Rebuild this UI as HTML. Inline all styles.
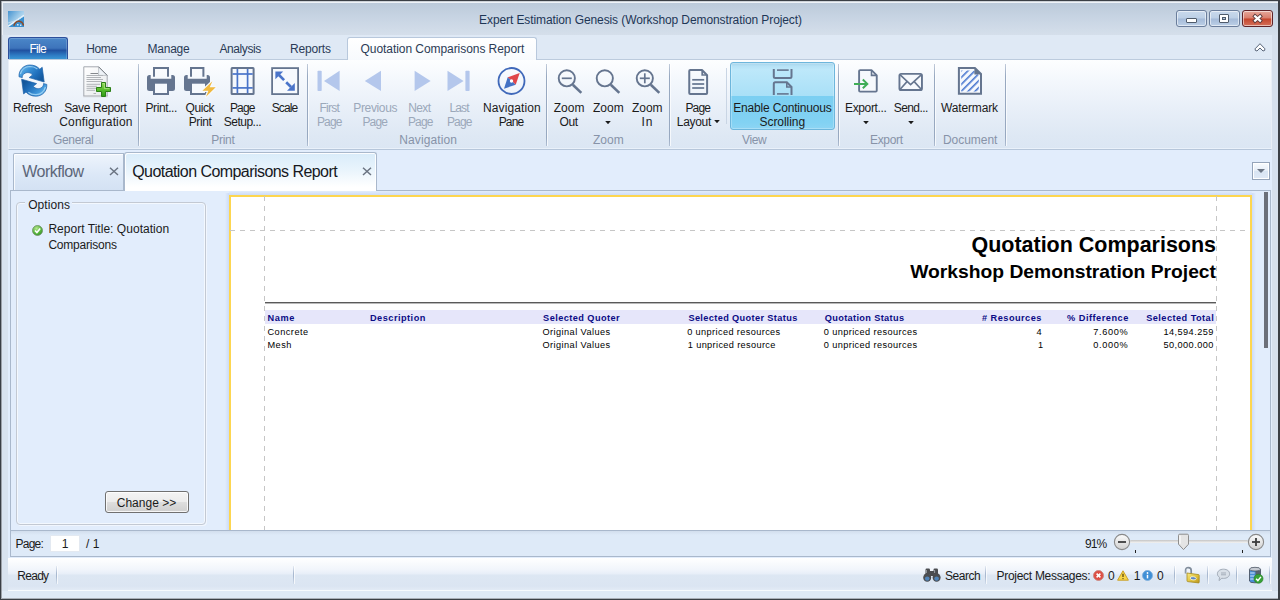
<!DOCTYPE html>
<html lang="en"><head><meta charset="utf-8"><title>Expert Estimation Genesis (Workshop Demonstration Project)</title>
<style>
html,body{margin:0;padding:0;}
body{width:1280px;height:600px;overflow:hidden;position:relative;background:#dfe9f5;font-family:"Liberation Sans", sans-serif;font-size:12px;}
div,svg{position:absolute;box-sizing:border-box;}
.t{white-space:nowrap;}
</style></head><body>
<div style="left:0px;top:0px;width:1280px;height:600px;background:#3b3f45;"></div>
<div style="left:1px;top:1px;width:1277px;height:598px;background:#a9aeb6;"></div>
<div style="left:1px;top:1px;width:1277px;height:597px;background:linear-gradient(90deg,#9da2a9 0,#9da2a9 1px,transparent 1px),linear-gradient(#cdd2d8 0,#cdd2d8 1px,transparent 1px),#eff3f8;"></div>
<div style="left:3px;top:3px;width:1275px;height:595px;background:#dfe9f5;"></div>
<div style="left:3px;top:3px;width:1275px;height:32px;background:linear-gradient(#bccada,#c6d3e2 40%,#d5dfeb);"></div>
<div style="left:2px;top:35px;width:6px;height:563px;background:#d9e3ef;"></div>
<div style="left:1272px;top:35px;width:6px;height:563px;background:#d6e0ed;"></div>
<svg style="left:8px;top:11px" width="16" height="16" viewBox="0 0 16 16"><defs><linearGradient id="ai" x1="0" y1="0" x2="1" y2=".8"><stop offset="0" stop-color="#4593d0"/><stop offset=".55" stop-color="#9fcbe9"/><stop offset="1" stop-color="#d6eaf7"/></linearGradient></defs>
<rect width="16" height="16" fill="url(#ai)"/><path d="M0 16 V15.6 L16 4.6 V16 Z" fill="#3a90d0"/><path d="M0 15.4 L16 4.4" stroke="#eef6fc" stroke-width="1.3"/><path d="M0 12 Q8 10.5 16 5" stroke="#cfe5f5" stroke-width=".7" fill="none"/>
<path d="M5.8 14.8 Q7.6 9.6 11.6 10.3 Q15 11 15.6 14.6" stroke="#8a4b2b" stroke-width="1.5" fill="none"/><path d="M9 13 h1.6 v1.6 h-1.6 z M12 13.6 h1.4 v1.4 h-1.4 z" fill="#cfe6f6"/></svg>
<div class="t" style="left:340.5px;width:600px;text-align:center;top:11.5px;line-height:16px;font-size:12px;color:#1e3656;font-weight:normal;letter-spacing:-0.1px;">Expert Estimation Genesis (Workshop Demonstration Project)</div>
<div style="left:1176px;top:10px;width:31px;height:17px;border:1px solid #6a7d9b;border-radius:3px;background:linear-gradient(#c9d9ec,#bccfe6 48%,#a4bad8 52%,#bdd0e7);box-shadow:inset 0 0 0 1px rgba(255,255,255,.55);"></div>
<div style="left:1209px;top:10px;width:31px;height:17px;border:1px solid #6a7d9b;border-radius:3px;background:linear-gradient(#c9d9ec,#bccfe6 48%,#a4bad8 52%,#bdd0e7);box-shadow:inset 0 0 0 1px rgba(255,255,255,.55);"></div>
<div style="left:1242px;top:10px;width:31px;height:17px;border:1px solid #5f2328;border-radius:3px;background:linear-gradient(#e5a89b,#d97d6b 48%,#c4452c 52%,#d4705a);box-shadow:inset 0 0 0 1px rgba(255,255,255,.55);"></div>
<div style="left:1186px;top:18px;width:11px;height:5px;background:#fff;border:1px solid #4f5b6b;border-radius:1px;"></div>
<div style="left:1219px;top:14px;width:10px;height:9px;background:#fff;border:1px solid #4f5b6b;border-radius:1px;"></div>
<div style="left:1222px;top:17px;width:4px;height:3px;background:#b4c5dc;border:1px solid #4f5b6b;"></div>
<svg style="left:1251px;top:13px" width="13" height="11" viewBox="0 0 13 11"><path d="M2.6 2 L10.6 9 M10.6 2 L2.6 9" stroke="#5a3a3c" stroke-width="3.8"/><path d="M3.3 2.6 L9.9 8.4 M9.9 2.6 L3.3 8.4" stroke="#fff" stroke-width="2.1"/></svg>
<div style="left:8px;top:37px;width:60px;height:23px;border:1px solid #2c4f9b;border-bottom:none;border-radius:3px 3px 0 0;background:linear-gradient(#4b87c9,#3d74bb 46%,#2051a0 56%,#2f7ec6 80%,#3d9bd6 100%);box-shadow:inset 0 0 0 1px rgba(255,255,255,.18);"></div>
<div class="t" style="left:29.50px;top:40.5px;line-height:16px;font-size:12px;color:#fff;font-weight:normal;letter-spacing:-0.754px;">File</div>
<div class="t" style="left:86.25px;top:40.5px;line-height:16px;font-size:12px;color:#2b3b55;font-weight:normal;letter-spacing:-0.362px;">Home</div>
<div class="t" style="left:147.50px;top:40.5px;line-height:16px;font-size:12px;color:#2b3b55;font-weight:normal;letter-spacing:-0.238px;">Manage</div>
<div class="t" style="left:219.50px;top:40.5px;line-height:16px;font-size:12px;color:#2b3b55;font-weight:normal;letter-spacing:-0.419px;">Analysis</div>
<div class="t" style="left:290.00px;top:40.5px;line-height:16px;font-size:12px;color:#2b3b55;font-weight:normal;letter-spacing:-0.170px;">Reports</div>
<div style="left:8px;top:59px;width:1264px;height:91px;box-shadow:inset 0 -1px 0 rgba(240,245,252,.7);border:1px solid #b6c6da;border-left-color:#e9eff7;border-right-color:#e9eff7;border-top:1px solid #bccbdd;background:linear-gradient(#fdfeff,#f3f7fc 25%,#e8eff8 55%,#dee8f4 85%,#dbe6f3);"></div>
<div style="left:347px;top:37px;width:190px;height:23px;border:1px solid #b8c8dc;border-bottom:none;border-radius:3px 3px 0 0;background:linear-gradient(#ffffff,#f7fafd);"></div>
<div class="t" style="left:360.50px;top:40.5px;line-height:16px;font-size:12px;color:#2b3b55;font-weight:normal;letter-spacing:-0.059px;">Quotation Comparisons Report</div>
<svg style="left:1254px;top:42.5px" width="12" height="10" viewBox="0 0 12 10"><path d="M1.1 5.8 L6 .7 L10.9 5.8 Q11.3 8 9 8 L6 5 L3 8 Q.7 8 1.1 5.8 Z" fill="#fff" stroke="#46546a" stroke-width=".9" stroke-linejoin="round"/></svg>
<div style="left:138px;top:64px;width:1px;height:82px;background:linear-gradient(rgba(147,164,189,.55),#97a8c0 15%,#97a8c0 90%,rgba(147,164,189,.6));"></div>
<div style="left:139px;top:64px;width:1px;height:82px;background:rgba(255,255,255,.7);"></div>
<div style="left:307px;top:64px;width:1px;height:82px;background:linear-gradient(rgba(147,164,189,.55),#97a8c0 15%,#97a8c0 90%,rgba(147,164,189,.6));"></div>
<div style="left:308px;top:64px;width:1px;height:82px;background:rgba(255,255,255,.7);"></div>
<div style="left:546px;top:64px;width:1px;height:82px;background:linear-gradient(rgba(147,164,189,.55),#97a8c0 15%,#97a8c0 90%,rgba(147,164,189,.6));"></div>
<div style="left:547px;top:64px;width:1px;height:82px;background:rgba(255,255,255,.7);"></div>
<div style="left:669px;top:64px;width:1px;height:82px;background:linear-gradient(rgba(147,164,189,.55),#97a8c0 15%,#97a8c0 90%,rgba(147,164,189,.6));"></div>
<div style="left:670px;top:64px;width:1px;height:82px;background:rgba(255,255,255,.7);"></div>
<div style="left:838px;top:64px;width:1px;height:82px;background:linear-gradient(rgba(147,164,189,.55),#97a8c0 15%,#97a8c0 90%,rgba(147,164,189,.6));"></div>
<div style="left:839px;top:64px;width:1px;height:82px;background:rgba(255,255,255,.7);"></div>
<div style="left:934px;top:64px;width:1px;height:82px;background:linear-gradient(rgba(147,164,189,.55),#97a8c0 15%,#97a8c0 90%,rgba(147,164,189,.6));"></div>
<div style="left:935px;top:64px;width:1px;height:82px;background:rgba(255,255,255,.7);"></div>
<div style="left:1005px;top:64px;width:1px;height:82px;background:linear-gradient(rgba(147,164,189,.55),#97a8c0 15%,#97a8c0 90%,rgba(147,164,189,.6));"></div>
<div style="left:1006px;top:64px;width:1px;height:82px;background:rgba(255,255,255,.7);"></div>
<div class="t" style="left:53.00px;top:131.5px;line-height:16px;font-size:12px;color:#8793a8;font-weight:normal;letter-spacing:-0.338px;">General</div>
<div class="t" style="left:211.25px;top:131.5px;line-height:16px;font-size:12px;color:#8793a8;font-weight:normal;letter-spacing:-0.272px;">Print</div>
<div class="t" style="left:399.25px;top:131.5px;line-height:16px;font-size:12px;color:#8793a8;font-weight:normal;letter-spacing:0.108px;">Navigation</div>
<div class="t" style="left:593.00px;top:131.5px;line-height:16px;font-size:12px;color:#8793a8;font-weight:normal;letter-spacing:0.024px;">Zoom</div>
<div class="t" style="left:742.00px;top:131.5px;line-height:16px;font-size:12px;color:#8793a8;font-weight:normal;letter-spacing:-0.376px;">View</div>
<div class="t" style="left:870.00px;top:131.5px;line-height:16px;font-size:12px;color:#8793a8;font-weight:normal;letter-spacing:-0.330px;">Export</div>
<div class="t" style="left:943.00px;top:131.5px;line-height:16px;font-size:12px;color:#8793a8;font-weight:normal;letter-spacing:-0.051px;">Document</div>
<div style="left:730px;top:62px;width:105px;height:68px;border:1px solid #6db6dc;border-radius:3px;background:linear-gradient(#a6d4eb,#b6e2f6 5%,#bde8fa 10%,#a9e0f7 49.5%,#7bcff2 50.5%,#82d2f3 90%,#8dd5f4);box-shadow:inset 0 0 0 1px rgba(255,255,255,.25);"></div>
<div style="left:726px;top:68px;width:1px;height:56px;background:#c9d5e4;"></div>
<div class="t" style="left:13.00px;top:100.0px;line-height:16px;font-size:12px;color:#1b1b1b;font-weight:normal;letter-spacing:-0.432px;">Refresh</div>
<div class="t" style="left:64.25px;top:100.0px;line-height:16px;font-size:12px;color:#1b1b1b;font-weight:normal;letter-spacing:-0.412px;">Save Report</div>
<div class="t" style="left:59.25px;top:114.0px;line-height:16px;font-size:12px;color:#1b1b1b;font-weight:normal;letter-spacing:0.150px;">Configuration</div>
<div class="t" style="left:145.50px;top:100.0px;line-height:16px;font-size:12px;color:#1b1b1b;font-weight:normal;letter-spacing:-0.406px;">Print...</div>
<div class="t" style="left:185.50px;top:100.0px;line-height:16px;font-size:12px;color:#1b1b1b;font-weight:normal;letter-spacing:-0.418px;">Quick</div>
<div class="t" style="left:188.75px;top:114.0px;line-height:16px;font-size:12px;color:#1b1b1b;font-weight:normal;letter-spacing:-0.397px;">Print</div>
<div class="t" style="left:230.00px;top:100.0px;line-height:16px;font-size:12px;color:#1b1b1b;font-weight:normal;letter-spacing:-0.900px;">Page</div>
<div class="t" style="left:223.75px;top:114.0px;line-height:16px;font-size:12px;color:#1b1b1b;font-weight:normal;letter-spacing:-0.504px;">Setup...</div>
<div class="t" style="left:271.75px;top:100.0px;line-height:16px;font-size:12px;color:#1b1b1b;font-weight:normal;letter-spacing:-0.900px;">Scale</div>
<div class="t" style="left:319.50px;top:100.0px;line-height:16px;font-size:12px;color:#9ba8ba;font-weight:normal;letter-spacing:-0.748px;">First</div>
<div class="t" style="left:317.00px;top:114.0px;line-height:16px;font-size:12px;color:#9ba8ba;font-weight:normal;letter-spacing:-0.900px;">Page</div>
<div class="t" style="left:353.25px;top:100.0px;line-height:16px;font-size:12px;color:#9ba8ba;font-weight:normal;letter-spacing:-0.348px;">Previous</div>
<div class="t" style="left:362.50px;top:114.0px;line-height:16px;font-size:12px;color:#9ba8ba;font-weight:normal;letter-spacing:-0.900px;">Page</div>
<div class="t" style="left:408.25px;top:100.0px;line-height:16px;font-size:12px;color:#9ba8ba;font-weight:normal;letter-spacing:-0.613px;">Next</div>
<div class="t" style="left:408.00px;top:114.0px;line-height:16px;font-size:12px;color:#9ba8ba;font-weight:normal;letter-spacing:-0.900px;">Page</div>
<div class="t" style="left:449.50px;top:100.0px;line-height:16px;font-size:12px;color:#9ba8ba;font-weight:normal;letter-spacing:-0.900px;">Last</div>
<div class="t" style="left:447.00px;top:114.0px;line-height:16px;font-size:12px;color:#9ba8ba;font-weight:normal;letter-spacing:-0.900px;">Page</div>
<div class="t" style="left:483.00px;top:100.0px;line-height:16px;font-size:12px;color:#1b1b1b;font-weight:normal;letter-spacing:0.108px;">Navigation</div>
<div class="t" style="left:498.75px;top:114.0px;line-height:16px;font-size:12px;color:#1b1b1b;font-weight:normal;letter-spacing:-0.900px;">Pane</div>
<div class="t" style="left:553.75px;top:100.0px;line-height:16px;font-size:12px;color:#1b1b1b;font-weight:normal;letter-spacing:0.024px;">Zoom</div>
<div class="t" style="left:559.50px;top:114.0px;line-height:16px;font-size:12px;color:#1b1b1b;font-weight:normal;letter-spacing:-0.379px;">Out</div>
<div class="t" style="left:593.00px;top:100.0px;line-height:16px;font-size:12px;color:#1b1b1b;font-weight:normal;letter-spacing:0.024px;">Zoom</div>
<div class="t" style="left:632.00px;top:100.0px;line-height:16px;font-size:12px;color:#1b1b1b;font-weight:normal;letter-spacing:-0.059px;">Zoom</div>
<div class="t" style="left:641.50px;top:114.0px;line-height:16px;font-size:12px;color:#1b1b1b;font-weight:normal;letter-spacing:0.916px;">In</div>
<div class="t" style="left:685.50px;top:100.0px;line-height:16px;font-size:12px;color:#1b1b1b;font-weight:normal;letter-spacing:-0.900px;">Page</div>
<div class="t" style="left:676.75px;top:114.0px;line-height:16px;font-size:12px;color:#1b1b1b;font-weight:normal;letter-spacing:-0.289px;">Layout</div>
<div class="t" style="left:733.25px;top:100.0px;line-height:16px;font-size:12px;color:#1b1b1b;font-weight:normal;letter-spacing:-0.182px;">Enable Continuous</div>
<div class="t" style="left:759.50px;top:114.0px;line-height:16px;font-size:12px;color:#1b1b1b;font-weight:normal;letter-spacing:-0.043px;">Scrolling</div>
<div class="t" style="left:845.00px;top:100.0px;line-height:16px;font-size:12px;color:#1b1b1b;font-weight:normal;letter-spacing:-0.356px;">Export...</div>
<div class="t" style="left:893.70px;top:100.0px;line-height:16px;font-size:12px;color:#1b1b1b;font-weight:normal;letter-spacing:-0.566px;">Send...</div>
<div class="t" style="left:941.00px;top:100.0px;line-height:16px;font-size:12px;color:#1b1b1b;font-weight:normal;letter-spacing:-0.153px;">Watermark</div>
<svg style="left:604.9px;top:120.7px" width="6" height="3.4" viewBox="0 0 6 3.4"><path d="M.2 0 H5.8 L3 3.2 Z" fill="#1b1b1b"/></svg>
<svg style="left:714px;top:119.9px" width="6" height="3.4" viewBox="0 0 6 3.4"><path d="M.2 0 H5.8 L3 3.2 Z" fill="#1b1b1b"/></svg>
<svg style="left:862.8px;top:121.0px" width="6" height="3.4" viewBox="0 0 6 3.4"><path d="M.2 0 H5.8 L3 3.2 Z" fill="#1b1b1b"/></svg>
<svg style="left:908px;top:121.0px" width="6" height="3.4" viewBox="0 0 6 3.4"><path d="M.2 0 H5.8 L3 3.2 Z" fill="#1b1b1b"/></svg>
<svg style="left:14px;top:62px" width="40" height="40" viewBox="0 0 40 40"><defs>
<linearGradient id="rg1" x1="0" y1="0" x2="1" y2=".6"><stop offset="0" stop-color="#7cc3f0"/><stop offset=".4" stop-color="#3b93d8"/><stop offset=".75" stop-color="#1f6fbc"/><stop offset="1" stop-color="#155a9f"/></linearGradient>
<linearGradient id="rg2" x1="0" y1="0" x2="1" y2=".6"><stop offset="0" stop-color="#8fd0f5"/><stop offset=".35" stop-color="#3f97db"/><stop offset=".8" stop-color="#1c68b3"/><stop offset="1" stop-color="#14579b"/></linearGradient></defs>
<path d="M5 14.8 C4.6 8 9.5 3.2 15.5 3 C20 2.9 23.5 4.5 25.8 7.2 L28.2 5.3 L30.2 20 L15.2 15.6 L18.6 12.9 C16.5 10.3 12.5 9.8 10 11.8 C8.7 12.9 8.2 14.2 8.3 15.6 Z" fill="url(#rg1)" stroke="#1b5ea6" stroke-width=".7" stroke-linejoin="round"/>
<path d="M6.4 12 C7.5 7.5 11.5 4.6 16 4.5 C19 4.5 21.5 5.4 23.4 7" stroke="#b7e0f8" stroke-width="1.1" fill="none" opacity=".75"/>
<g transform="rotate(180 18.9 18.6)"><path d="M5 14.8 C4.6 8 9.5 3.2 15.5 3 C20 2.9 23.5 4.5 25.8 7.2 L28.2 5.3 L30.2 20 L15.2 15.6 L18.6 12.9 C16.5 10.3 12.5 9.8 10 11.8 C8.7 12.9 8.2 14.2 8.3 15.6 Z" fill="url(#rg2)" stroke="#1b5ea6" stroke-width=".7" stroke-linejoin="round"/>
<path d="M6.4 12 C7.5 7.5 11.5 4.6 16 4.5 C19 4.5 21.5 5.4 23.4 7" stroke="#a9daf7" stroke-width="1.3" fill="none" opacity=".8"/></g>
</svg>
<svg style="left:82px;top:65px" width="30" height="33" viewBox="0 0 30 33"><defs><linearGradient id="pg" x1="0" y1="0" x2="1" y2="1"><stop offset="0" stop-color="#ffffff"/><stop offset="1" stop-color="#e6e9ec"/></linearGradient>
<linearGradient id="gp" x1="0" y1="0" x2="0" y2="1"><stop offset="0" stop-color="#93d85a"/><stop offset=".5" stop-color="#58bd2c"/><stop offset="1" stop-color="#2e9a16"/></linearGradient></defs>
<path d="M1.8 1.8 H16.6 L25.2 10.4 V31 H1.8 Z" fill="url(#pg)" stroke="#a4a9af" stroke-width="1"/>
<path d="M1.2 31.7 H25.8" stroke="#c9ccd0" stroke-width="1"/>
<path d="M16.6 1.8 V10.4 H25.2 Z" fill="#eef2f7" stroke="#b4b9bf" stroke-width=".8"/>
<path d="M16.6 1.8 L25.2 10.4" stroke="#6f747a" stroke-width=".9"/>
<g stroke="#b1b4b8" stroke-width="1"><path d="M8.5 8.5 H16" stroke="#85888c"/><path d="M4.5 10.5 H21"/><path d="M4.5 12.5 H19"/><path d="M4.5 14.5 H21"/><path d="M4.5 16.5 H20"/><path d="M4.5 19.3 H18"/><path d="M4.5 21.3 H15"/><path d="M4.5 23.3 H14"/><path d="M4.5 25.3 H13"/><path d="M11.5 28.5 H14"/></g>
<path d="M19.5 17.5 H23.5 V22.5 H28.5 V26.5 H23.5 V31.5 H19.5 V26.5 H14.5 V22.5 H19.5 Z" fill="url(#gp)" stroke="#2b7f16" stroke-width="1" stroke-linejoin="round"/>
<path d="M20.6 18.6 H22.4 V23.6 H27.4" stroke="#b9ea8f" stroke-width=".9" fill="none" opacity=".8"/>
</svg>
<svg style="left:147px;top:67px" width="29" height="29" viewBox="0 0 29 29"><path d="M7 9.7 V1 H21 V9.7" fill="none" stroke="#65758f" stroke-width="2"/>
<path d="M0 10.5 Q0 8 2.5 8 H3.7 V11.7 H24.3 V8 H25.5 Q28 8 28 10.5 V21.5 Q28 24 25.5 24 H2.5 Q0 24 0 21.5 Z" fill="#65758f"/>
<rect x="7" y="15.7" width="14" height="11.3" fill="#f6f9fd" stroke="#65758f" stroke-width="2"/></svg>
<svg style="left:184.3px;top:67px" width="33" height="31" viewBox="0 0 33 31"><path d="M7 9.7 V1 H19.4 V9.7" fill="none" stroke="#65758f" stroke-width="2"/>
<path d="M0 10.5 Q0 8 2.5 8 H3.7 V11.7 H22.7 V8 H23.5 Q26 8 26 10.5 V21.5 Q26 24 23.5 24 H2.5 Q0 24 0 21.5 Z" fill="#65758f"/>
<rect x="7" y="15.7" width="15" height="11.3" fill="#f6f9fd" stroke="#65758f" stroke-width="2"/>
<path d="M28.4 14.3 L18.4 23.7 H24.4 L22 29.7 L31.7 20.3 H25.7 Z" fill="#f1b93e" stroke="#f6f9fd" stroke-width="2.4" stroke-linejoin="round" paint-order="stroke"/></svg>
<svg style="left:230px;top:66px" width="26" height="30" viewBox="0 0 26 30"><rect x="1.6" y="2.1" width="22" height="26" fill="#f6f9fd" stroke="#65758f" stroke-width="2" rx=".6"/>
<g stroke="#4a74c9" stroke-width="1.7"><path d="M7.4 3 V27.2"/><path d="M17.6 3 V27.2"/><path d="M2.5 8 H22.7"/><path d="M2.5 21.9 H22.7"/></g></svg>
<svg style="left:270px;top:66px" width="30" height="30" viewBox="0 0 30 30"><rect x="2.1" y="2.1" width="26" height="26" fill="#f6f9fd" stroke="#65758f" stroke-width="1.8"/>
<path d="M9 9 L14.1 14.1 M16.2 16.2 L21 21" stroke="#4a74c9" stroke-width="2.7"/><path d="M5.4 5.4 H13.2 L5.4 13.2 Z" fill="#4a74c9"/><path d="M24.8 24.8 H17 L24.8 17 Z" fill="#4a74c9"/></svg>
<svg style="left:317px;top:70px" width="24" height="22" viewBox="0 0 24 22"><rect x=".5" y=".8" width="4.2" height="20.2" rx=".8" fill="#b4c7ec"/><path d="M22.6 .8 V21 L7 10.9 Z" fill="#b4c7ec"/></svg>
<svg style="left:364px;top:70px" width="18" height="22" viewBox="0 0 18 22"><path d="M17 .8 V21 L.8 10.9 Z" fill="#b4c7ec"/></svg>
<svg style="left:414px;top:70px" width="18" height="22" viewBox="0 0 18 22"><path d="M.6 .8 V21 L16.6 10.9 Z" fill="#b4c7ec"/></svg>
<svg style="left:447px;top:70px" width="24" height="22" viewBox="0 0 24 22"><rect x="18.4" y=".8" width="4.2" height="20.2" rx=".8" fill="#b4c7ec"/><path d="M.5 .8 V21 L16.6 10.9 Z" fill="#b4c7ec"/></svg>
<svg style="left:496px;top:65px" width="32" height="32" viewBox="0 0 32 32"><circle cx="15.5" cy="16" r="13" fill="none" stroke="#4069ba" stroke-width="1.8"/>
<path d="M23.7 8 L11.7 12.3 L19.7 19.7 Z" fill="#e0474a"/><path d="M8 23.7 L11.7 12.3 L19.7 19.7 Z" fill="#4472c4"/><circle cx="15.5" cy="16" r="1.7" fill="#fff"/></svg>
<svg style="left:555.5px;top:67.6px" width="28" height="28" viewBox="0 0 28 28"><circle cx="10.8" cy="10.3" r="8.1" fill="none" stroke="#65758f" stroke-width="1.9"/><path d="M16.8 16.7 L25.3 24.9" stroke="#65758f" stroke-width="2.6"/><path d="M5.8 10.3 H15.8" stroke="#65758f" stroke-width="1.7"/></svg>
<svg style="left:594.4px;top:67.6px" width="28" height="28" viewBox="0 0 28 28"><circle cx="10.8" cy="10.3" r="8.1" fill="none" stroke="#65758f" stroke-width="1.9"/><path d="M16.8 16.7 L25.3 24.9" stroke="#65758f" stroke-width="2.6"/></svg>
<svg style="left:634.1px;top:67.6px" width="28" height="28" viewBox="0 0 28 28"><circle cx="10.8" cy="10.3" r="8.1" fill="none" stroke="#65758f" stroke-width="1.9"/><path d="M16.8 16.7 L25.3 24.9" stroke="#65758f" stroke-width="2.6"/><path d="M5.8 10.3 H15.8" stroke="#65758f" stroke-width="1.7"/><path d="M10.8 5.3 V15.3" stroke="#65758f" stroke-width="1.7"/></svg>
<svg style="left:686px;top:68px" width="24" height="28" viewBox="0 0 24 28"><path d="M3.25 3 Q3.25 2 4.25 2 H16 L21.1 7.2 V25 Q21.1 26 20.1 26 H4.25 Q3.25 26 3.25 25 Z" fill="none" stroke="#65758f" stroke-width="2" stroke-linejoin="round"/>
<path d="M16.2 2 V7 H21.1" fill="none" stroke="#65758f" stroke-width="1.7"/>
<g stroke="#65758f" stroke-width="1.7"><path d="M6.2 11.8 H18.2"/><path d="M6.2 16 H18.2"/><path d="M6.2 20 H18.2"/></g></svg>
<svg style="left:771px;top:68px" width="24" height="28" viewBox="0 0 24 28"><path d="M2.8 1 V8.4 Q2.8 9.9 4.3 9.9 H19 Q20.5 9.9 20.5 8.4 V1" fill="none" stroke="#65758f" stroke-width="2"/>
<path d="M6 2.1 H17.7" stroke="#65758f" stroke-width="1.6"/>
<path d="M2.8 27 V15.7 Q2.8 14.2 4.3 14.2 H15.8 L20.5 19 V27" fill="none" stroke="#65758f" stroke-width="2"/><path d="M15.8 14.2 V19 H20.5" fill="none" stroke="#65758f" stroke-width="1.6"/>
<path d="M6 25.9 H17.7" stroke="#65758f" stroke-width="1.6"/></svg>
<svg style="left:853px;top:68px" width="28" height="26" viewBox="0 0 28 26"><path d="M6.1 3.1 Q6.1 2.1 7.1 2.1 H18.5 L23.75 7.4 V22.6 Q23.75 23.6 22.75 23.6 H7.1 Q6.1 23.6 6.1 22.6 Z" fill="#f6f9fd" stroke="#65758f" stroke-width="1.9" stroke-linejoin="round"/>
<path d="M18.5 2.1 V7.4 H23.75" fill="none" stroke="#65758f" stroke-width="1.6"/>
<path d="M1 15.9 H13.6 M9.8 11.5 L14.3 15.9 L9.8 20.3" fill="none" stroke="#3fae57" stroke-width="2"/></svg>
<svg style="left:897px;top:72px" width="28" height="20" viewBox="0 0 28 20"><rect x="2.45" y="1.85" width="22.5" height="16.2" rx="1.6" fill="#f6f9fd" stroke="#65758f" stroke-width="1.9"/>
<path d="M3.2 2.8 L13.6 12.6 L24.2 2.8 M3.2 17.2 L10 9.6 M24.2 17.2 L17.2 9.6" fill="none" stroke="#65758f" stroke-width="1.6"/></svg>
<svg style="left:956px;top:66px" width="28" height="30" viewBox="0 0 28 30"><defs><pattern id="hat" width="4.9" height="4.9" patternUnits="userSpaceOnUse" patternTransform="rotate(-45) translate(0 1.2)"><rect width="4.9" height="1.6" fill="#4a78d0"/></pattern></defs>
<path d="M2.9 1.9 H18.9 L25 8 V27.8 H2.9 Z" fill="#f6f9fd" stroke="#65758f" stroke-width="2" stroke-linejoin="miter"/>
<path d="M5.2 4.4 H17.6 L22.8 9.6 V25.4 H5.2 Z" fill="url(#hat)"/>
<path d="M18.4 1.4 V8.4 H25.4 Z" fill="#65758f"/></svg>
<div style="left:8px;top:150px;width:1264px;height:408px;background:#e2edfc;"></div>
<div style="left:10px;top:190px;width:1261px;height:341px;border:1px solid #a9b8cc;border-bottom:none;background:#e2edfc;"></div>
<div style="left:229px;top:191px;width:1023px;height:4px;background:linear-gradient(rgba(205,220,247,0),rgba(205,220,247,1));"></div>
<div style="left:13px;top:153px;width:111px;height:38px;border:1px solid #a9b8cc;border-bottom:none;border-radius:2px 0 0 0;background:linear-gradient(#eef4fc,#dce8f7 55%,#d3e1f3);box-shadow:inset 1px 1px 0 rgba(255,255,255,.8);"></div>
<div style="left:13px;top:190px;width:111px;height:1px;background:#a9b8cc;"></div>
<div class="t" style="left:22.20px;top:161.5px;line-height:20px;font-size:16px;color:#5c6679;font-weight:normal;letter-spacing:-0.505px;">Workflow</div>
<div style="left:124px;top:152px;width:253px;height:39px;border:1px solid #a9b8cc;border-bottom:none;border-radius:3px 3px 0 0;background:linear-gradient(#d9ecfa,#e9f4fc 45%,#ffffff 90%);box-shadow:inset 1px 1px 0 rgba(255,255,255,.9), inset -1px 0 0 rgba(255,255,255,.9);"></div>
<div class="t" style="left:132.20px;top:161.5px;line-height:20px;font-size:16px;color:#16181d;font-weight:normal;letter-spacing:-0.560px;">Quotation Comparisons Report</div>
<svg style="left:108.5px;top:167.3px" width="10" height="9" viewBox="0 0 10 9"><path d="M1 .8 L9 8 M9 .8 L1 8" stroke="#6b7482" stroke-width="1.5" fill="none"/></svg>
<svg style="left:361.5px;top:167.3px" width="10" height="9" viewBox="0 0 10 9"><path d="M1 .8 L9 8 M9 .8 L1 8" stroke="#6b7482" stroke-width="1.5" fill="none"/></svg>
<div style="left:1252px;top:162px;width:18px;height:18px;border:1px solid #94a4ba;background:linear-gradient(#f8fbfe,#e6eef8 48%,#d9e5f3 52%,#dfe9f6);box-shadow:inset 0 0 0 1px #fff;"></div>
<svg style="left:1257px;top:169px" width="8" height="4" viewBox="0 0 8 4"><path d="M0 0 H8 L4 4 Z" fill="#6b7584"/></svg>
<div style="left:16px;top:202px;width:190px;height:323px;border:1px solid #c3c9d3;border-radius:4px;box-shadow:inset 0 0 0 1px rgba(255,255,255,.6), 1px 1px 0 rgba(255,255,255,.5);"></div>
<div style="left:25px;top:197px;width:47px;height:14px;background:#e2edfc;"></div>
<div class="t" style="left:28.20px;top:197.0px;line-height:16px;font-size:12px;color:#1b1b1b;font-weight:normal;letter-spacing:0.074px;">Options</div>
<svg style="left:32px;top:224.5px" width="11" height="11" viewBox="0 0 11 11"><defs><radialGradient id="ck" cx=".4" cy=".3" r=".8"><stop offset="0" stop-color="#b5e68f"/><stop offset=".6" stop-color="#56b43b"/><stop offset="1" stop-color="#2f8a22"/></radialGradient></defs>
<circle cx="5.5" cy="5.5" r="5" fill="url(#ck)" stroke="#6f8f66" stroke-width=".8"/><path d="M3 5.6 L4.9 7.6 L8.2 3.6" fill="none" stroke="#fff" stroke-width="1.5"/></svg>
<div class="t" style="left:48.40px;top:221.0px;line-height:16px;font-size:12px;color:#1b1b1b;font-weight:normal;letter-spacing:0.031px;">Report Title: Quotation</div>
<div class="t" style="left:48.40px;top:236.8px;line-height:16px;font-size:12px;color:#1b1b1b;font-weight:normal;letter-spacing:-0.209px;">Comparisons</div>
<div style="left:105px;top:491px;width:84px;height:22px;border:1px solid #707070;border-radius:3px;background:linear-gradient(#f4f4f4,#ececec 48%,#dedede 52%,#cfcfcf);box-shadow:inset 0 0 0 1px rgba(255,255,255,.8);"></div>
<div class="t" style="left:116.70px;top:494.5px;line-height:16px;font-size:12px;color:#1b1b1b;font-weight:normal;letter-spacing:0.028px;">Change &gt;&gt;</div>
<div style="left:225px;top:193px;width:4px;height:337px;background:linear-gradient(90deg,rgba(205,220,247,0),rgba(205,220,247,1));"></div>
<div style="left:1252px;top:193px;width:4px;height:337px;background:linear-gradient(270deg,rgba(205,220,247,0),rgba(205,220,247,1));"></div>
<div style="left:229px;top:195px;width:1023px;height:340px;background:#fff;border:2px solid #fdd650;border-bottom:none;"></div>
<div style="left:264px;top:196px;width:1px;height:334px;background:repeating-linear-gradient(#c6c6c6 0 5px,transparent 5px 10px);"></div>
<div style="left:1216px;top:196px;width:1px;height:334px;background:repeating-linear-gradient(#c6c6c6 0 5px,transparent 5px 10px);"></div>
<div style="left:230px;top:230px;width:1021px;height:1px;background:repeating-linear-gradient(90deg,#c6c6c6 0 5px,transparent 5px 10px);"></div>
<div class="t" style="left:716px;width:500px;text-align:right;top:231.5px;line-height:26px;font-size:21.47px;font-weight:bold;color:#000;">Quotation Comparisons</div>
<div class="t" style="left:716px;width:500px;text-align:right;top:259.5px;line-height:24px;font-size:19.28px;font-weight:bold;color:#000;">Workshop Demonstration Project</div>
<div style="left:265px;top:302px;width:951px;height:1px;background:#5a5a5a;"></div>
<div style="left:265px;top:303px;width:951px;height:1px;background:#b9b9b9;"></div>
<div style="left:264.5px;top:310px;width:951.5px;height:14px;background:#e6e6fa;"></div>
<div class="t" style="left:267.50px;top:310.5px;line-height:14px;font-size:9.2px;color:#0c0c86;font-weight:bold;letter-spacing:0.612px;">Name</div>
<div class="t" style="left:370.00px;top:310.5px;line-height:14px;font-size:9.2px;color:#0c0c86;font-weight:bold;letter-spacing:0.482px;">Description</div>
<div class="t" style="left:543.10px;top:310.5px;line-height:14px;font-size:9.2px;color:#0c0c86;font-weight:bold;letter-spacing:0.430px;">Selected Quoter</div>
<div class="t" style="left:688.40px;top:310.5px;line-height:14px;font-size:9.2px;color:#0c0c86;font-weight:bold;letter-spacing:0.372px;">Selected Quoter Status</div>
<div class="t" style="left:824.70px;top:310.5px;line-height:14px;font-size:9.2px;color:#0c0c86;font-weight:bold;letter-spacing:0.360px;">Quotation Status</div>
<div class="t" style="left:982.00px;top:310.5px;line-height:14px;font-size:9.2px;color:#0c0c86;font-weight:bold;letter-spacing:0.476px;"># Resources</div>
<div class="t" style="left:1067.00px;top:310.5px;line-height:14px;font-size:9.2px;color:#0c0c86;font-weight:bold;letter-spacing:0.514px;">% Difference</div>
<div class="t" style="left:1146.20px;top:310.5px;line-height:14px;font-size:9.2px;color:#0c0c86;font-weight:bold;letter-spacing:0.457px;">Selected Total</div>
<div class="t" style="left:267.50px;top:324.7px;line-height:14px;font-size:9.2px;color:#000;font-weight:normal;letter-spacing:0.476px;">Concrete</div>
<div class="t" style="left:542.50px;top:324.7px;line-height:14px;font-size:9.2px;color:#000;font-weight:normal;letter-spacing:0.434px;">Original Values</div>
<div class="t" style="left:687.20px;top:324.7px;line-height:14px;font-size:9.2px;color:#000;font-weight:normal;letter-spacing:0.379px;">0 unpriced resources</div>
<div class="t" style="left:823.75px;top:324.7px;line-height:14px;font-size:9.2px;color:#000;font-weight:normal;letter-spacing:0.397px;">0 unpriced resources</div>
<div class="t" style="left:1036.60px;top:324.7px;line-height:14px;font-size:9.2px;color:#000;font-weight:normal;letter-spacing:-0.300px;">4</div>
<div class="t" style="left:1093.30px;top:324.7px;line-height:14px;font-size:9.2px;color:#000;font-weight:normal;letter-spacing:0.622px;">7.600%</div>
<div class="t" style="left:1163.50px;top:324.7px;line-height:14px;font-size:9.2px;color:#000;font-weight:normal;letter-spacing:0.425px;">14,594.259</div>
<div class="t" style="left:267.50px;top:338.3px;line-height:14px;font-size:9.2px;color:#000;font-weight:normal;letter-spacing:0.464px;">Mesh</div>
<div class="t" style="left:542.50px;top:338.3px;line-height:14px;font-size:9.2px;color:#000;font-weight:normal;letter-spacing:0.434px;">Original Values</div>
<div class="t" style="left:687.80px;top:338.3px;line-height:14px;font-size:9.2px;color:#000;font-weight:normal;letter-spacing:0.356px;">1 unpriced resource</div>
<div class="t" style="left:823.75px;top:338.3px;line-height:14px;font-size:9.2px;color:#000;font-weight:normal;letter-spacing:0.397px;">0 unpriced resources</div>
<div class="t" style="left:1037.90px;top:338.3px;line-height:14px;font-size:9.2px;color:#000;font-weight:normal;letter-spacing:-0.900px;">1</div>
<div class="t" style="left:1093.30px;top:338.3px;line-height:14px;font-size:9.2px;color:#000;font-weight:normal;letter-spacing:0.622px;">0.000%</div>
<div class="t" style="left:1163.50px;top:338.3px;line-height:14px;font-size:9.2px;color:#000;font-weight:normal;letter-spacing:0.425px;">50,000.000</div>
<div style="left:1264px;top:192px;width:4px;height:156px;background:#6c7079;"></div>
<div style="left:10px;top:530px;width:1261px;height:27px;border:1px solid #a9b8cc;background:linear-gradient(#d2deed,#deeaf8 4px,#deeaf8);"></div>
<div class="t" style="left:15.60px;top:536.0px;line-height:16px;font-size:12px;color:#1b1b1b;font-weight:normal;letter-spacing:-0.781px;">Page:</div>
<div style="left:50px;top:535px;width:30px;height:17px;background:#fff;border:1px solid #e3e9f1;"></div>
<div class="t" style="left:-235px;width:600px;text-align:center;top:536.0px;line-height:16px;font-size:12px;color:#1e1e1e;font-weight:normal;">1</div>
<div class="t" style="left:85.90px;top:536.0px;line-height:16px;font-size:12px;color:#1b1b1b;font-weight:normal;letter-spacing:0.116px;">/ 1</div>
<div class="t" style="left:1085.00px;top:535.5px;line-height:16px;font-size:12px;color:#1b1b1b;font-weight:normal;letter-spacing:-0.900px;">91%</div>
<div style="left:1130px;top:540px;width:118px;height:3px;background:linear-gradient(#c4c4c4,#d9d9d9 40%,#f4f4f4);border-radius:1px;"></div>
<div style="left:1135px;top:550px;width:1px;height:3px;background:#222;"></div>
<div style="left:1242px;top:550px;width:1px;height:3px;background:#222;"></div>
<svg style="left:1113px;top:533px" width="18" height="18" viewBox="0 0 18 18"><defs><linearGradient id="cg1122" x1="0" y1="0" x2="0" y2="1"><stop offset="0" stop-color="#fdfdfd"/><stop offset="1" stop-color="#cfcfcf"/></linearGradient></defs><circle cx="9" cy="9" r="7.6" fill="url(#cg1122)" stroke="#8a8a8a" stroke-width="1.1"/><path d="M5 9 H13" stroke="#3c3c3c" stroke-width="1.8"/></svg>
<svg style="left:1247px;top:533px" width="18" height="18" viewBox="0 0 18 18"><defs><linearGradient id="cg1256" x1="0" y1="0" x2="0" y2="1"><stop offset="0" stop-color="#fdfdfd"/><stop offset="1" stop-color="#cfcfcf"/></linearGradient></defs><circle cx="9" cy="9" r="7.6" fill="url(#cg1256)" stroke="#8a8a8a" stroke-width="1.1"/><path d="M5 9 H13" stroke="#3c3c3c" stroke-width="1.8"/><path d="M9 5 V13" stroke="#3c3c3c" stroke-width="1.8"/></svg>
<svg style="left:1177px;top:532px" width="13" height="19" viewBox="0 0 13 19"><path d="M1.5 3.4 Q1.5 2.2 2.7 2.2 H10.3 Q11.5 2.2 11.5 3.4 V12.2 L6.5 17.6 L1.5 12.2 Z" fill="#e4e4e4" stroke="#8d8d8d" stroke-width="1"/><path d="M3 3.6 V11.8" stroke="#fafafa" stroke-width="1.4"/></svg>
<div style="left:8px;top:558px;width:1264px;height:33px;background:linear-gradient(#ffffff,#f1f5fb 35%,#e7eef8 49%,#dde7f3 51%,#dbe5f2 85%,#e4ecf6);"></div>
<div style="left:8px;top:590px;width:1264px;height:1px;background:#f7fafd;"></div>
<div style="left:2px;top:591px;width:1276px;height:7px;background:#dfe9f5;"></div>
<div class="t" style="left:17.25px;top:568.0px;line-height:16px;font-size:12px;color:#1b1b1b;font-weight:normal;letter-spacing:-0.709px;">Ready</div>
<div style="left:56px;top:566px;width:1px;height:18px;background:linear-gradient(rgba(170,186,208,.2),#a9b9d0 40%,#a9b9d0 60%,rgba(170,186,208,.2));"></div>
<div style="left:57px;top:566px;width:1px;height:18px;background:rgba(255,255,255,.7);"></div>
<div style="left:293px;top:566px;width:1px;height:18px;background:linear-gradient(rgba(170,186,208,.2),#a9b9d0 40%,#a9b9d0 60%,rgba(170,186,208,.2));"></div>
<div style="left:294px;top:566px;width:1px;height:18px;background:rgba(255,255,255,.7);"></div>
<div style="left:985px;top:566px;width:1px;height:18px;background:linear-gradient(rgba(170,186,208,.2),#a9b9d0 40%,#a9b9d0 60%,rgba(170,186,208,.2));"></div>
<div style="left:986px;top:566px;width:1px;height:18px;background:rgba(255,255,255,.7);"></div>
<div style="left:1174px;top:566px;width:1px;height:18px;background:linear-gradient(rgba(170,186,208,.2),#a9b9d0 40%,#a9b9d0 60%,rgba(170,186,208,.2));"></div>
<div style="left:1175px;top:566px;width:1px;height:18px;background:rgba(255,255,255,.7);"></div>
<div style="left:1207px;top:566px;width:1px;height:18px;background:linear-gradient(rgba(170,186,208,.2),#a9b9d0 40%,#a9b9d0 60%,rgba(170,186,208,.2));"></div>
<div style="left:1208px;top:566px;width:1px;height:18px;background:rgba(255,255,255,.7);"></div>
<div style="left:1236px;top:566px;width:1px;height:18px;background:linear-gradient(rgba(170,186,208,.2),#a9b9d0 40%,#a9b9d0 60%,rgba(170,186,208,.2));"></div>
<div style="left:1237px;top:566px;width:1px;height:18px;background:rgba(255,255,255,.7);"></div>
<div style="left:1269px;top:566px;width:1px;height:18px;background:linear-gradient(rgba(170,186,208,.2),#a9b9d0 40%,#a9b9d0 60%,rgba(170,186,208,.2));"></div>
<div style="left:1270px;top:566px;width:1px;height:18px;background:rgba(255,255,255,.7);"></div>
<svg style="left:923px;top:567px" width="18" height="16" viewBox="0 0 18 16"><g fill="#4a4c50"><rect x="2.5" y="1.5" width="4.5" height="6" rx="1.2"/><rect x="10.5" y="1.5" width="4.5" height="6" rx="1.2"/><rect x="6.5" y="4" width="5" height="5"/>
<ellipse cx="4.2" cy="10.5" rx="4" ry="4.3"/><ellipse cx="13.6" cy="10.5" rx="4" ry="4.3"/></g><ellipse cx="4.2" cy="11.6" rx="2.3" ry="2.2" fill="#4f83b8"/><ellipse cx="13.6" cy="11.6" rx="2.3" ry="2.2" fill="#4f83b8"/><path d="M3.4 3 V6 M11.6 3 V6" stroke="#9a9fa6" stroke-width="1"/></svg>
<div class="t" style="left:945.10px;top:568.0px;line-height:16px;font-size:12px;color:#1b1b1b;font-weight:normal;letter-spacing:-0.490px;">Search</div>
<div class="t" style="left:996.50px;top:568.0px;line-height:16px;font-size:12px;color:#1b1b1b;font-weight:normal;letter-spacing:-0.286px;">Project Messages:</div>
<svg style="left:1093px;top:570px" width="11" height="11" viewBox="0 0 11 11"><circle cx="5.5" cy="5.5" r="5" fill="#dd4f45" stroke="#c9867f" stroke-width=".9"/><path d="M3.6 3.6 L7.4 7.4 M7.4 3.6 L3.6 7.4" stroke="#fff" stroke-width="1.5"/></svg>
<div class="t" style="left:1108.00px;top:568.0px;line-height:16px;font-size:12px;color:#1b1b1b;font-weight:normal;letter-spacing:-0.900px;">0</div>
<svg style="left:1117px;top:570px" width="12" height="11" viewBox="0 0 12 11"><path d="M6 .8 L11.4 10.2 H.6 Z" fill="#f7d548" stroke="#c79a1c" stroke-width=".9" stroke-linejoin="round"/><path d="M6 3.8 V7" stroke="#4a3b0a" stroke-width="1.2"/><circle cx="6" cy="8.6" r=".7" fill="#4a3b0a"/></svg>
<div class="t" style="left:1133.70px;top:568.0px;line-height:16px;font-size:12px;color:#1b1b1b;font-weight:normal;letter-spacing:-0.900px;">1</div>
<svg style="left:1142px;top:570px" width="11" height="11" viewBox="0 0 11 11"><circle cx="5.5" cy="5.5" r="5" fill="#3f8fd6" stroke="#7fb0dc" stroke-width=".9"/><path d="M5.5 4.8 V8.4" stroke="#fff" stroke-width="1.5"/><circle cx="5.5" cy="3" r=".9" fill="#fff"/></svg>
<div class="t" style="left:1157.00px;top:568.0px;line-height:16px;font-size:12px;color:#1b1b1b;font-weight:normal;letter-spacing:-0.800px;">0</div>
<svg style="left:1184px;top:566px" width="17" height="18" viewBox="0 0 17 18"><defs><linearGradient id="lk" x1="0" y1="0" x2="1" y2="1"><stop offset="0" stop-color="#f6e98a"/><stop offset=".5" stop-color="#e3c53f"/><stop offset="1" stop-color="#b9951f"/></linearGradient></defs>
<path d="M1.6 7.6 V4.4 Q1.6 1.6 4.4 1.6 Q7.2 1.6 7.2 4.4 V8.2" fill="none" stroke="#7f8b99" stroke-width="1.7"/><path d="M2.2 7.6 V4.6 Q2.3 2.4 4.2 2.3" fill="none" stroke="#c9d2dc" stroke-width=".7"/>
<path d="M3 7 L14.6 8.6 Q15.2 8.7 15.2 9.4 V16.2 Q15.2 17 14.4 16.9 L3.6 15.6 Q3 15.5 3 14.8 Z" fill="url(#lk)" stroke="#a58a1f" stroke-width=".8"/>
<ellipse cx="9.2" cy="12.3" rx="3.1" ry="1.6" fill="#5b86c4" stroke="#f7f2cf" stroke-width=".9" transform="rotate(6 9.2 12.3)"/></svg>
<svg style="left:1216px;top:568px" width="15" height="14" viewBox="0 0 15 14"><path d="M7.5 1.2 C11.2 1.2 13.6 3.2 13.6 5.8 C13.6 8.4 11.2 10.4 7.5 10.4 C6.9 10.4 6.3 10.35 5.8 10.25 L3 12.6 L3.6 9.4 C2.2 8.6 1.4 7.3 1.4 5.8 C1.4 3.2 3.8 1.2 7.5 1.2 Z" fill="#d9e0e8" stroke="#a4adb9" stroke-width="1"/><path d="M5 5 H10 M5 6.8 H10" stroke="#a4adb9" stroke-width="1"/></svg>
<svg style="left:1247px;top:566px" width="18" height="20" viewBox="0 0 18 20"><path d="M2.5 3.2 V15 Q2.5 16.8 8 16.8 Q13.5 16.8 13.5 15 V3.2" fill="#4a8fd8" stroke="#4b5563" stroke-width=".9"/><path d="M8.5 3 V16.8 Q13.5 16.6 13.5 15 V3.2 Z" fill="#596270"/>
<ellipse cx="8" cy="3.2" rx="5.5" ry="1.9" fill="#c6cbd3" stroke="#4b5563" stroke-width=".8"/><path d="M3.2 7 H7.6 M3.2 10 H7.6 M3.2 13 H7.6" stroke="#cfe3fa" stroke-width="1.1"/>
<circle cx="11.5" cy="12.7" r="4.5" fill="#36a336" stroke="#2c7e2b" stroke-width=".7"/><path d="M9.1 12.7 L10.9 14.6 L13.9 10.9" fill="none" stroke="#fff" stroke-width="1.5"/></svg>
</body></html>
